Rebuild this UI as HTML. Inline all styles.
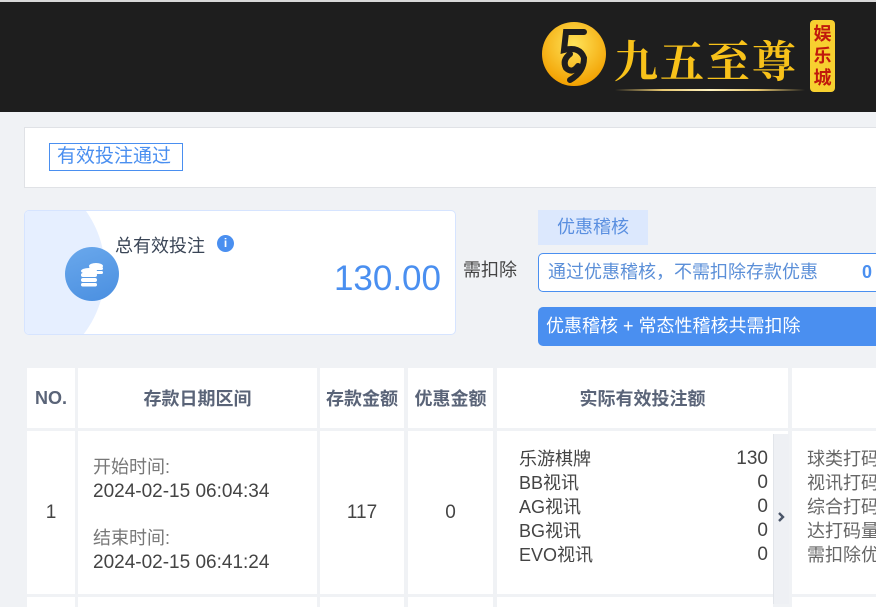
<!DOCTYPE html>
<html><head><meta charset="utf-8"><style>
*{margin:0;padding:0;box-sizing:border-box}
body{width:876px;height:604px;overflow:hidden;background:#f0f2f5;font-family:"Liberation Sans","Noto Sans CJK SC",sans-serif;position:relative}
.a{position:absolute}
.hdr{left:0;top:0;width:876px;height:112px;background:#1e1e1e;border-top:2px solid #d8d8d8}
.cell{position:absolute;background:#fff}
.th{font-weight:bold;color:#5a6478;font-size:18px;display:flex;align-items:center;justify-content:center}
.td{color:#444;font-size:19px;display:flex;align-items:center;justify-content:center}
</style></head><body>
<div class="a hdr">
 <svg class="a" style="left:540px;top:18px" width="72" height="68" viewBox="0 0 72 68">
  <defs><radialGradient id="g" cx="50%" cy="35%" r="65%"><stop offset="0" stop-color="#ffe45a"/><stop offset="1" stop-color="#f2a000"/></radialGradient></defs>
  <circle cx="34" cy="34" r="32" fill="url(#g)"/>
  <path d="M44 12 L26 12 L24 30 Q40 26 44 38 Q44 52 30 60 M30 34 Q22 40 26 48 Q32 54 38 46" stroke="#1e1e1e" stroke-width="6" fill="none" stroke-linecap="round"/>
 </svg>
 <div class="a" style="left:614px;top:24px;font-size:44px;font-weight:bold;color:#f8c21a;letter-spacing:2px;font-family:'Noto Serif CJK SC','Noto Sans CJK SC',serif">九五至尊</div>
 <div class="a" style="left:810px;top:18px;width:25px;height:72px;background:#f7d030;border-radius:4px;color:#c0180c;font-size:18px;line-height:22px;text-align:center;font-weight:bold;padding-top:3px">娱<br>乐<br>城</div>
 <div class="a" style="left:615px;top:87px;width:190px;height:2px;background:linear-gradient(90deg,transparent,#e8c870,#fff3c0,#e8c870,transparent)"></div>
</div>
<div class="a" style="left:24px;top:127px;width:860px;height:61px;background:#fff;border:1px solid #e0e2e6"></div>
<div class="a" style="left:49px;top:143px;width:134px;height:28px;border:1px solid #4a8ff0;color:#4a8ff0;font-size:19px;line-height:26px;padding-left:7px;white-space:nowrap">有效投注通过</div>

<div class="a" style="left:24px;top:210px;width:432px;height:125px;background:#fff;border:1px solid #d6e4ff;border-radius:5px;overflow:hidden">
 <div class="a" style="left:-110px;top:-40px;width:190px;height:200px;border-radius:50%;background:#e6efff"></div>
 <div class="a" style="left:40px;top:36px;width:54px;height:54px;border-radius:50%;background:linear-gradient(160deg,#6aa8ec,#4a8fe0)"></div>
 <svg class="a" style="left:54px;top:50px" width="28" height="26" viewBox="0 0 28 26"><g fill="#fff"><ellipse cx="17" cy="5" rx="7" ry="3"/><rect x="10" y="6" width="14" height="3" rx="1.5"/><rect x="10" y="10" width="14" height="3" rx="1.5"/><ellipse cx="10" cy="10" rx="8" ry="3"/><rect x="2" y="12" width="16" height="4" rx="2"/><rect x="2" y="17" width="16" height="4" rx="2"/><rect x="2" y="22" width="16" height="3.5" rx="1.7"/></g></svg>
 <div class="a" style="left:90px;top:21px;font-size:18px;color:#3a4556">总有效投注</div>
 <div class="a" style="left:192px;top:24px;width:17px;height:17px;border-radius:50%;background:#4a8ff0;color:#fff;font-size:12px;font-weight:bold;text-align:center;line-height:17px">i</div>
 <div class="a" style="right:14px;top:48px;font-size:35px;color:#4a8ff0">130.00</div>
</div>

<div class="a" style="left:463px;top:256px;font-size:18px;color:#444">需扣除</div>
<div class="a" style="left:538px;top:210px;width:110px;height:35px;background:#dce8fd;color:#5a8fe0;font-size:18px;text-align:center;line-height:35px">优惠稽核</div>
<div class="a" style="left:538px;top:253px;width:350px;height:39px;background:#fff;border:1px solid #4a8ff0;border-radius:5px;color:#5b8fd8;font-size:18px;line-height:37px;padding-left:9px;white-space:nowrap">通过优惠稽核，不需扣除存款优惠<span class="a" style="left:323px;font-weight:bold;color:#4a8ff0">0</span></div>
<div class="a" style="left:538px;top:307px;width:350px;height:39px;background:#4a8ff0;border-radius:5px;color:#fff;font-size:18px;line-height:39px;padding-left:8px;white-space:nowrap">优惠稽核 + 常态性稽核共需扣除</div>

<div class="cell th" style="left:27px;top:368px;width:48px;height:60px">NO.</div>
<div class="cell th" style="left:78px;top:368px;width:239px;height:60px">存款日期区间</div>
<div class="cell th" style="left:320px;top:368px;width:84px;height:60px;white-space:nowrap">存款金额</div>
<div class="cell th" style="left:408px;top:368px;width:85px;height:60px;white-space:nowrap">优惠金额</div>
<div class="cell th" style="left:497px;top:368px;width:291px;height:60px">实际有效投注额</div>
<div class="cell th" style="left:792px;top:368px;width:90px;height:60px"></div>

<div class="cell td" style="left:27px;top:431px;width:48px;height:163px">1</div>
<div class="cell" style="left:78px;top:431px;width:239px;height:163px;font-size:19px;color:#444;line-height:24px;padding:24px 0 0 15px;white-space:nowrap"><span style="color:#777;font-size:18px">开始时间:</span><br>2024-02-15 06:04:34<br><div style="height:22px"></div><span style="color:#777;font-size:18px">结束时间:</span><br>2024-02-15 06:41:24</div>
<div class="cell td" style="left:320px;top:431px;width:84px;height:163px">117</div>
<div class="cell td" style="left:408px;top:431px;width:85px;height:163px">0</div>
<div class="cell" style="left:497px;top:431px;width:291px;height:163px;font-size:18px;color:#444;line-height:24px;padding:16px 0 0 22px">
 <div style="width:249px;display:flex;justify-content:space-between"><span>乐游棋牌</span><span style="font-size:19px">130</span></div>
 <div style="width:249px;display:flex;justify-content:space-between"><span>BB视讯</span><span style="font-size:19px">0</span></div>
 <div style="width:249px;display:flex;justify-content:space-between"><span>AG视讯</span><span style="font-size:19px">0</span></div>
 <div style="width:249px;display:flex;justify-content:space-between"><span>BG视讯</span><span style="font-size:19px">0</span></div>
 <div style="width:249px;display:flex;justify-content:space-between"><span>EVO视讯</span><span style="font-size:19px">0</span></div>
</div>
<div class="a" style="left:773px;top:434px;width:16px;height:170px;background:#eef0f4;border-left:1px solid #e2e5ea"></div>
<svg class="a" style="left:777px;top:511px" width="8" height="12" viewBox="0 0 8 12"><path d="M2 2 L6 6 L2 10" stroke="#4a5568" stroke-width="2.4" fill="none"/></svg>
<div class="cell" style="left:792px;top:431px;width:90px;height:163px;font-size:18px;color:#666;line-height:24px;padding:16px 0 0 15px;white-space:nowrap;overflow:hidden">球类打码<br>视讯打码<br>综合打码<br>达打码量<br>需扣除优</div>

<div class="cell" style="left:27px;top:597px;width:48px;height:10px"></div>
<div class="cell" style="left:78px;top:597px;width:239px;height:10px"></div>
<div class="cell" style="left:320px;top:597px;width:84px;height:10px"></div>
<div class="cell" style="left:408px;top:597px;width:85px;height:10px"></div>
<div class="cell" style="left:497px;top:597px;width:276px;height:10px"></div>
<div class="cell" style="left:792px;top:597px;width:90px;height:10px"></div>
</body></html>
